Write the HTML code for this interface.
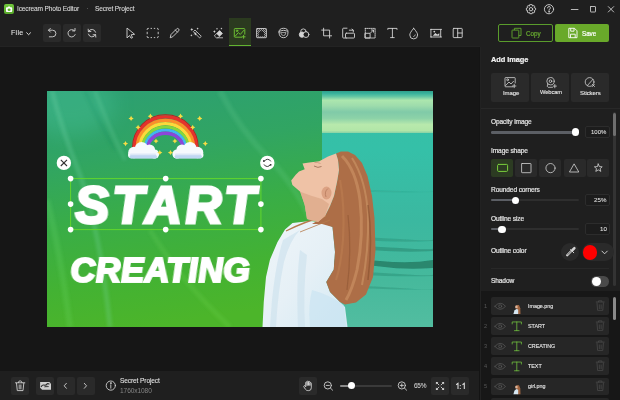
<!DOCTYPE html>
<html><head><meta charset="utf-8">
<style>
*{margin:0;padding:0;box-sizing:border-box}
html,body{width:620px;height:400px;overflow:hidden;background:#1f1f1f;font-family:"Liberation Sans",sans-serif;color:#e6e6e6;-webkit-font-smoothing:antialiased}
.a{position:absolute}
.t{position:absolute;white-space:nowrap;font-size:7px;line-height:1;letter-spacing:-0.2px;will-change:transform;-webkit-text-stroke:0.2px currentColor}
.btn{position:absolute;background:#2a2a2a;border-radius:2px}
svg{position:absolute;overflow:visible}
</style></head><body>
<!-- title bar -->
<div class="a" style="left:0;top:0;width:620px;height:47px;background:#1f1f1f"></div>
<div class="a" style="left:4.2px;top:4.4px;width:9.6px;height:9.4px;background:linear-gradient(#72c83c,#58a82a);border-radius:2px"></div>
<svg style="left:4px;top:4px" width="10" height="10"><path d="M2 4 Q2 3.2 2.8 3.2 H3.8 L4.4 2.4 H5.8 L6.4 3.2 H7.4 Q8.2 3.2 8.2 4 V7.2 Q8.2 8 7.4 8 H2.8 Q2 8 2 7.2 Z" fill="#fff"/><ellipse cx="5.1" cy="5.7" rx="1.5" ry="1.2" fill="#62b530"/></svg>
<div class="t" style="left:17px;top:5.5px;font-size:6.6px;color:#dcdcdc;letter-spacing:-0.15px;-webkit-text-stroke:0.08px #dcdcdc">Icecream Photo Editor</div>
<div class="a" style="left:86.5px;top:8.3px;width:1.2px;height:1.2px;background:#666;border-radius:50%"></div>
<div class="t" style="left:95px;top:5.5px;font-size:6.6px;color:#dcdcdc;letter-spacing:-0.15px;-webkit-text-stroke:0.08px #dcdcdc">Secret Project</div>

<!-- toolbar -->
<div class="t" style="left:10.8px;top:30px;font-size:7.1px;color:#e6e6e6;letter-spacing:0.25px;-webkit-text-stroke:0.05px #e6e6e6">File</div>
<svg style="left:26px;top:31.8px" width="6" height="4"><path d="M0.4 0.5 L2.6 2.7 L4.8 0.5" fill="none" stroke="#e0e0e0" stroke-width="1"/></svg>
<div class="btn" style="left:43px;top:24px;width:18px;height:18px"></div>
<div class="btn" style="left:63px;top:24px;width:18px;height:18px"></div>
<div class="btn" style="left:83px;top:24px;width:18px;height:18px"></div>

<!-- active tab -->
<div class="a" style="left:229px;top:18px;width:22px;height:29px;background:#2b3a1f"></div>
<div class="a" style="left:229px;top:45px;width:22px;height:2px;background:#62b530"></div>

<!-- toolbar icons -->
<svg style="left:0;top:0" width="620" height="47" fill="none" stroke="#d4d4d4" stroke-width="0.9" stroke-linecap="round" stroke-linejoin="round">
<!-- undo -->
<path d="M48.5 30.2 H52.6 A3.3 3.3 0 0 1 52.6 36.8 H49.3"/><path d="M50.4 28.3 L48.5 30.2 L50.4 32.1"/>
<!-- redo -->
<path d="M74.3 30.6 A3.7 3.7 0 1 0 75.2 34.6"/><path d="M72.6 30.9 H75 V28.4"/>
<!-- refresh -->
<path d="M88.5 31.6 A3.8 3.8 0 0 1 95.6 32.2"/><path d="M95.5 34.7 A3.8 3.8 0 0 1 88.4 34.1"/>
<path d="M88.2 29.2 L88.4 31.7 L90.9 31.5"/><path d="M95.8 37.1 L95.6 34.6 L93.1 34.8"/>
<!-- cursor -->
<path d="M127.3 28.3 L134.6 34.3 L131 34.8 L132.6 37.6 L131 38.2 L129.5 35.5 L127.3 37.7 Z"/>
<!-- marquee -->
<path d="M147.2 30 V29.2 Q147.2 28.4 148 28.4 H148.8 M150.6 28.4 H152 M153.8 28.4 H155.2 M157 28.4 H157.4 Q158.2 28.4 158.2 29.2 V30 M158.2 31.8 V34.2 M158.2 36 V36.8 Q158.2 37.6 157.4 37.6 H157 M155.2 37.6 H153.8 M152 37.6 H150.6 M148.8 37.6 H148 Q147.2 37.6 147.2 36.8 V36 M147.2 34.2 V31.8" stroke-linecap="butt"/>
<!-- pencil -->
<path d="M170.3 37.4 L171 34.5 L176.6 28.9 A1.4 1.4 0 0 1 178.6 30.9 L173 36.5 Z"/><path d="M175.4 30.1 L177.4 32.1"/>
<!-- wand -->
<path d="M193.6 31.4 L195 30 L201.3 36.3 L199.9 37.7 Z" stroke-width="0.8"/><path d="M195.8 32.8 L194.4 34.2" stroke-width="0.8"/><path d="M194.3 31.7 L196.7 34.1 L195.3 35.5 Z" fill="#d4d4d4" stroke="none"/>
<path d="M191.8 28.1 Q192.175 29.225 193.3 29.6 Q192.175 29.975 191.8 31.1 Q191.425 29.975 190.3 29.6 Q191.425 29.225 191.8 28.1 Z M197.6 27.5 Q197.875 28.325000000000003 198.7 28.6 Q197.875 28.875 197.6 29.700000000000003 Q197.325 28.875 196.5 28.6 Q197.325 28.325000000000003 197.6 27.5 Z M191.4 34.199999999999996 Q191.675 35.025 192.5 35.3 Q191.675 35.574999999999996 191.4 36.4 Q191.125 35.574999999999996 190.3 35.3 Q191.125 35.025 191.4 34.199999999999996 Z " fill="#d4d4d4" stroke="none"/>
<!-- eraser -->
<path d="M214.6 35.6 L219.6 30.6 L222.4 33.4 L218 37.8 H216.8 Z" stroke-width="0.8"/><path d="M216.5 33.7 L219.6 30.6 L222.4 33.4 L219.3 36.5 Z" fill="#d4d4d4" stroke="none"/><path d="M218 37.8 H222.6" stroke-width="0.8"/>
<path d="M214.4 30.3 Q214.725 31.275000000000002 215.70000000000002 31.6 Q214.725 31.925 214.4 32.9 Q214.07500000000002 31.925 213.1 31.6 Q214.07500000000002 31.275000000000002 214.4 30.3 Z M217 27.8 Q217.25 28.55 218.0 28.8 Q217.25 29.05 217 29.8 Q216.75 29.05 216.0 28.8 Q216.75 28.55 217 27.8 Z M221.4 27.6 Q221.65 28.35 222.4 28.6 Q221.65 28.85 221.4 29.6 Q221.15 28.85 220.4 28.6 Q221.15 28.35 221.4 27.6 Z " fill="#d4d4d4" stroke="none"/>
<!-- texture -->
<rect x="256.6" y="28.5" width="9.8" height="9.2" rx="0.6"/>
<g stroke="none" fill="#bdbdbd"><rect x="257.30" y="29.20" width="0.95" height="0.95"/><rect x="257.30" y="31.10" width="0.95" height="0.95"/><rect x="257.30" y="33.00" width="0.95" height="0.95"/><rect x="257.30" y="34.90" width="0.95" height="0.95"/><rect x="257.30" y="36.80" width="0.95" height="0.95"/><rect x="258.25" y="30.15" width="0.95" height="0.95"/><rect x="258.25" y="32.05" width="0.95" height="0.95"/><rect x="258.25" y="33.95" width="0.95" height="0.95"/><rect x="258.25" y="35.85" width="0.95" height="0.95"/><rect x="259.20" y="29.20" width="0.95" height="0.95"/><rect x="259.20" y="31.10" width="0.95" height="0.95"/><rect x="259.20" y="33.00" width="0.95" height="0.95"/><rect x="259.20" y="34.90" width="0.95" height="0.95"/><rect x="259.20" y="36.80" width="0.95" height="0.95"/><rect x="260.15" y="30.15" width="0.95" height="0.95"/><rect x="260.15" y="32.05" width="0.95" height="0.95"/><rect x="260.15" y="33.95" width="0.95" height="0.95"/><rect x="260.15" y="35.85" width="0.95" height="0.95"/><rect x="261.10" y="29.20" width="0.95" height="0.95"/><rect x="261.10" y="31.10" width="0.95" height="0.95"/><rect x="261.10" y="33.00" width="0.95" height="0.95"/><rect x="261.10" y="34.90" width="0.95" height="0.95"/><rect x="261.10" y="36.80" width="0.95" height="0.95"/><rect x="262.05" y="30.15" width="0.95" height="0.95"/><rect x="262.05" y="32.05" width="0.95" height="0.95"/><rect x="262.05" y="33.95" width="0.95" height="0.95"/><rect x="262.05" y="35.85" width="0.95" height="0.95"/><rect x="263.00" y="29.20" width="0.95" height="0.95"/><rect x="263.00" y="31.10" width="0.95" height="0.95"/><rect x="263.00" y="33.00" width="0.95" height="0.95"/><rect x="263.00" y="34.90" width="0.95" height="0.95"/><rect x="263.00" y="36.80" width="0.95" height="0.95"/><rect x="263.95" y="30.15" width="0.95" height="0.95"/><rect x="263.95" y="32.05" width="0.95" height="0.95"/><rect x="263.95" y="33.95" width="0.95" height="0.95"/><rect x="263.95" y="35.85" width="0.95" height="0.95"/><rect x="264.90" y="29.20" width="0.95" height="0.95"/><rect x="264.90" y="31.10" width="0.95" height="0.95"/><rect x="264.90" y="33.00" width="0.95" height="0.95"/><rect x="264.90" y="34.90" width="0.95" height="0.95"/><rect x="264.90" y="36.80" width="0.95" height="0.95"/></g>
<path d="M259 36.2 V33.8 A2.5 2.5 0 0 1 264 33.8 V36.2 Z" fill="#1f1f1f" stroke="none"/><path d="M259.8 32.3 L261.5 30.8 L263.2 32.3" stroke="#1f1f1f" stroke-width="1"/>
<!-- face -->
<path d="M279 32 Q279 28.3 283.5 28.3 Q288 28.3 288 32 Q288 37.7 283.5 37.7 Q279 37.7 279 32 Z"/><path d="M279.6 31 Q283.5 29.5 287.4 31"/><path d="M281 32.6 H286 L285 35 Q283.5 36.2 282 35 Z" stroke-width="0.7"/>
<!-- colors -->
<circle cx="303.4" cy="31.6" r="2.7"/><circle cx="302" cy="34.6" r="2.7" fill="#d4d4d4"/><circle cx="306" cy="34.6" r="2.9" fill="#1f1f1f" stroke="#d4d4d4"/>
<!-- crop -->
<path d="M323.6 28.2 V35.8 H331.6 M321.7 30.1 H329.6 V38"/>
<!-- transform -->
<path d="M346.5 38 H343.5 A0.8 0.8 0 0 1 342.7 37.2 V29 A0.8 0.8 0 0 1 343.5 28.2 H347"/>
<rect x="345.5" y="33.2" width="9" height="4.8" rx="0.8"/><path d="M349.3 30.2 H353.3 V32 M352 29.1 L353.3 30.2"/>
<!-- dotted resize -->
<rect x="365.3" y="28.4" width="9.8" height="9.6" stroke-dasharray="1 1"/><rect x="365.3" y="33.3" width="4.8" height="4.7"/><path d="M370.5 33 L373.5 30 M371.3 30 H373.5 V32.2"/>
<!-- T -->
<path d="M387.8 29.4 V28.4 H397 V29.4 M392.4 28.4 V37.6 M390.6 37.6 H394.2"/>
<!-- drop -->
<path d="M413.7 28.3 Q409.6 33 409.8 35 A3.9 3.9 0 0 0 417.6 35 Q417.8 33 413.7 28.3 Z"/><path d="M415.3 34.8 Q415.1 36.3 413.6 36.6" stroke-width="0.7"/>
<!-- frame image -->
<rect x="431.3" y="29.4" width="9.4" height="7.6"/><path d="M430.5 29.4 H431.3 M440.7 29.4 H441.5 M430.5 37 H431.3 M440.7 37 H441.5"/>
<path d="M432.8 35.8 L435.3 33 L437.3 34.5 L439.3 33.3 V35.8 Z" fill="#d4d4d4" stroke="none"/><circle cx="434.3" cy="31.6" r="0.9" fill="#d4d4d4" stroke="none"/>
<!-- layout -->
<rect x="453.2" y="28.4" width="9" height="9.2" rx="0.6"/><path d="M457.7 28.4 V37.6 M457.7 33 H462.2"/>
<!-- window controls -->
<circle cx="531" cy="9.2" r="1.7"/>
<path d="M531 4.6 L532.2 4.7 L532.6 6.1 L533.9 5.5 L534.8 6.4 L534.2 7.7 L535.6 8.1 V9.8 L534.2 10.7 L534.8 12 L533.9 12.9 L532.6 12.3 L532.2 13.7 H529.8 L529.4 12.3 L528.1 12.9 L527.2 12 L527.8 10.7 L526.4 10.3 V8.1 L527.8 7.7 L527.2 6.4 L528.1 5.5 L529.4 6.1 L529.8 4.7 Z"/>
<circle cx="549" cy="9.2" r="4.6"/><path d="M547.6 7.9 A1.4 1.4 0 1 1 549.4 9.2 Q549 9.6 549 10.4"/><circle cx="549" cy="11.8" r="0.35" fill="#d4d4d4"/>
<path d="M571.3 9.5 H578" stroke-width="0.85"/>
<rect x="590.5" y="6.5" width="5" height="5.5" rx="0.4" stroke-width="0.85"/>
<path d="M608.3 6.6 L613.7 12 M613.7 6.6 L608.3 12" stroke-width="0.85"/>
</svg>
<!-- active icon -->
<svg style="left:0;top:0" width="620" height="47" fill="none" stroke="#6fc234" stroke-width="0.95" stroke-linecap="round" stroke-linejoin="round">
<path d="M241.6 37.2 H235 A0.7 0.7 0 0 1 234.3 36.5 V29.3 A0.7 0.7 0 0 1 235 28.6 H244.1 A0.7 0.7 0 0 1 244.8 29.3 V34.2"/>
<path d="M235.2 36.2 L238.3 32.6 L240.3 34.4 L243.8 30.4"/><circle cx="237" cy="30.8" r="0.8"/>
<path d="M243.6 35.3 V38.3 M242.1 36.8 H245.1"/>
</svg>
<!-- copy / save -->
<div class="a" style="left:497.8px;top:24.2px;width:55.2px;height:18px;border:1.1px solid #5a9c2c;border-radius:2px"></div>
<div class="t" style="left:525.8px;top:30.8px;font-size:6.3px;color:#68ac30;letter-spacing:-0.05px">Copy</div>
<svg style="left:0;top:0" width="620" height="47" fill="none" stroke="#62a82e" stroke-width="0.9"><path d="M514.4 30 V28.3 H521 V35.5 H518.8"/><rect x="512" y="30.1" width="6.8" height="7.9" rx="0.5"/></svg>
<div class="a" style="left:555px;top:24.2px;width:53.8px;height:18px;background:#69a92a;border-radius:2px"></div>
<div class="t" style="left:582px;top:30.8px;font-size:6.3px;color:#fff;letter-spacing:-0.05px">Save</div>
<svg style="left:0;top:0" width="620" height="47" fill="none" stroke="#fff" stroke-width="0.9"><path d="M568.8 28.3 H574.5 L577 30.8 V37.7 H568.8 Z M570.7 28.3 V31.2 H574 V28.3 M570.5 37.7 V34.2 H575.2 V37.7"/></svg>

<!-- canvas -->
<div class="a" style="left:0;top:47px;width:480px;height:324px;background:#161616"></div>
<div class="a" style="left:0;top:46px;width:480px;height:1px;background:#232323"></div>
<svg style="left:47px;top:91px;overflow:hidden" width="386" height="236" viewBox="47 91 386 236">
<defs>
<linearGradient id="gg" x1="0" y1="0" x2="0.25" y2="1">
<stop offset="0" stop-color="#2c9f74"/><stop offset="0.3" stop-color="#31a562"/><stop offset="0.55" stop-color="#39ad47"/><stop offset="0.8" stop-color="#43b233"/><stop offset="1" stop-color="#4cb52a"/>
</linearGradient>
<filter id="blur8" x="-50%" y="-50%" width="200%" height="200%"><feGaussianBlur stdDeviation="10"/></filter>
<filter id="blur2" x="-20%" y="-20%" width="140%" height="140%"><feGaussianBlur stdDeviation="1.8"/></filter>
<filter id="soft" x="-10%" y="-10%" width="120%" height="120%"><feGaussianBlur stdDeviation="0.6"/></filter>
<linearGradient id="shirt" x1="0" y1="0" x2="1" y2="1"><stop offset="0" stop-color="#eef5f9"/><stop offset="0.5" stop-color="#e6f0f6"/><stop offset="1" stop-color="#d4eaf4"/></linearGradient>
<linearGradient id="sea" x1="0" y1="0" x2="0" y2="1">
<stop offset="0" stop-color="#36bfa6"/><stop offset="0.25" stop-color="#35c0a8"/><stop offset="0.55" stop-color="#3bb8a0"/><stop offset="0.8" stop-color="#46b99c"/><stop offset="1" stop-color="#52bda0"/>
</linearGradient>
<linearGradient id="sky" x1="0" y1="0" x2="0" y2="1">
<stop offset="0" stop-color="#2f9f8c"/><stop offset="0.06" stop-color="#3ab29c"/><stop offset="0.13" stop-color="#62c6a4"/><stop offset="0.22" stop-color="#ace6ae"/><stop offset="0.35" stop-color="#9edcac"/><stop offset="0.5" stop-color="#80caa8"/><stop offset="0.65" stop-color="#8cd2a8"/><stop offset="0.8" stop-color="#b8e9ac"/><stop offset="0.94" stop-color="#b2e6a8"/><stop offset="1" stop-color="#86d2a6"/>
</linearGradient>
</defs>
<rect x="47" y="91" width="386" height="236" fill="url(#gg)"/>
<ellipse cx="70" cy="105" rx="45" ry="30" fill="#45bd92" opacity="0.45" filter="url(#blur8)"/>
<g filter="url(#blur2)" fill="none">
<path d="M52 91 Q62 130 80 175 Q100 230 110 327" stroke="#7fe0b0" stroke-width="5" opacity="0.22"/>
<path d="M95 91 Q110 130 125 160" stroke="#7fe0b0" stroke-width="4" opacity="0.18"/>
<path d="M85 91 Q100 125 115 150" stroke="#1a7a50" stroke-width="3" opacity="0.15"/>
<path d="M220 91 Q240 130 270 160 Q300 190 320 240" stroke="#80e0a0" stroke-width="6" opacity="0.15"/>
<path d="M47 200 Q60 250 70 327" stroke="#80e880" stroke-width="6" opacity="0.15"/>
<path d="M150 230 Q180 280 230 327" stroke="#90f070" stroke-width="5" opacity="0.12"/>
</g>
<rect x="322" y="91" width="111" height="236" fill="url(#sea)"/>
<rect x="322" y="91" width="111" height="42" fill="url(#sky)"/>
<g filter="url(#soft)">
<path d="M322 238 Q360 236 400 239 T433 238 V241 Q400 243 360 240 T322 242 Z" fill="#1f7d66" opacity="0.3"/>
<path d="M322 247 Q360 245 400 248 T433 247 V251 Q400 253 360 249 T322 252 Z" fill="#1f7d66" opacity="0.45"/>
<path d="M322 260 Q350 258 380 261 T433 260 V268 Q405 270 380 266.5 T322 268 Z" fill="#186b54" opacity="0.65"/>
<path d="M322 272 Q360 271 400 274 T433 273 V276 Q400 277 360 275 T322 276 Z" fill="#1f7d66" opacity="0.35"/>
<path d="M322 286 Q360 285 400 288 T433 287 V289.5 Q400 290 360 288 T322 289 Z" fill="#1f7d66" opacity="0.3"/>
<path d="M322 190 Q360 189 400 191 T433 190 V192 Q400 193 360 191.5 T322 192.5 Z" fill="#1f7d66" opacity="0.15"/>
</g>
<!-- rainbow -->
<path d="M132.61 151.6 L132.61 147.6 A32.79 32.90 0 0 1 198.19 147.6 L198.19 151.6" fill="none" stroke="#b81c1c" stroke-width="1.06"/>
<path d="M134.41 151.6 L134.41 147.6 A30.99 30.70 0 0 1 196.39 147.6 L196.39 151.6" fill="none" stroke="#e5312c" stroke-width="3.24"/>
<path d="M137.20 151.6 L137.20 147.6 A28.20 27.30 0 0 1 193.60 147.6 L193.60 151.6" fill="none" stroke="#fb8f2a" stroke-width="3.24"/>
<path d="M139.98 151.6 L139.98 147.6 A25.42 23.90 0 0 1 190.82 147.6 L190.82 151.6" fill="none" stroke="#fdd93a" stroke-width="3.24"/>
<path d="M142.68 151.6 L142.68 147.6 A22.72 20.60 0 0 1 188.12 147.6 L188.12 151.6" fill="none" stroke="#86d63e" stroke-width="3.06"/>
<path d="M145.18 151.6 L145.18 147.6 A20.22 17.55 0 0 1 185.62 147.6 L185.62 151.6" fill="none" stroke="#42b6f0" stroke-width="2.79"/>
<path d="M147.88 151.6 L147.88 147.6 A17.52 14.25 0 0 1 182.92 147.6 L182.92 151.6" fill="none" stroke="#8b46d9" stroke-width="3.52"/>
<g fill="#f6f9fd">
<circle cx="134" cy="152.5" r="5.8"/><circle cx="141.5" cy="148.5" r="6.6"/><circle cx="149.5" cy="150" r="5.6"/><circle cx="154.5" cy="154" r="4.6"/>
<rect x="128" y="152" width="30.5" height="6.2" rx="3.1"/>
<circle cx="177" cy="154" r="4.6"/><circle cx="182" cy="150" r="5.6"/><circle cx="190" cy="148.5" r="6.6"/><circle cx="197.5" cy="152.5" r="5.8"/>
<rect x="173" y="152" width="30.5" height="6.2" rx="3.1"/>
</g>
<g fill="#bfd6f2"><rect x="129.5" y="155" width="27.5" height="3.4" rx="1.7"/><rect x="174.5" y="155" width="27.5" height="3.4" rx="1.7"/></g>
<g fill="#dde8f7"><rect x="130" y="153.6" width="26" height="1.6" rx="0.8"/><rect x="175" y="153.6" width="26" height="1.6" rx="0.8"/></g>
<path d="M131.1 115.80000000000001 Q131.6 117.9 133.7 118.4 Q131.6 118.9 131.1 121.0 Q130.6 118.9 128.5 118.4 Q130.6 117.9 131.1 115.80000000000001Z" fill="#f7dc45"/><path d="M150.4 113.60000000000001 Q150.9 115.7 153.0 116.2 Q150.9 116.7 150.4 118.8 Q149.9 116.7 147.8 116.2 Q149.9 115.7 150.4 113.60000000000001Z" fill="#f7dc45"/><path d="M180.5 113.60000000000001 Q181.0 115.7 183.1 116.2 Q181.0 116.7 180.5 118.8 Q180.0 116.7 177.9 116.2 Q180.0 115.7 180.5 113.60000000000001Z" fill="#f7dc45"/><path d="M199.7 115.80000000000001 Q200.2 117.9 202.29999999999998 118.4 Q200.2 118.9 199.7 121.0 Q199.2 118.9 197.1 118.4 Q199.2 117.9 199.7 115.80000000000001Z" fill="#f7dc45"/><path d="M138.1 124.7 Q138.6 126.8 140.7 127.3 Q138.6 127.8 138.1 129.9 Q137.6 127.8 135.5 127.3 Q137.6 126.8 138.1 124.7Z" fill="#f7dc45"/><path d="M192.7 124.7 Q193.2 126.8 195.29999999999998 127.3 Q193.2 127.8 192.7 129.9 Q192.2 127.8 190.1 127.3 Q192.2 126.8 192.7 124.7Z" fill="#f7dc45"/><path d="M125.5 141.0 Q126.0 143.1 128.1 143.6 Q126.0 144.1 125.5 146.2 Q125.0 144.1 122.9 143.6 Q125.0 143.1 125.5 141.0Z" fill="#f7dc45"/><path d="M205.3 141.0 Q205.8 143.1 207.9 143.6 Q205.8 144.1 205.3 146.2 Q204.8 144.1 202.70000000000002 143.6 Q204.8 143.1 205.3 141.0Z" fill="#f7dc45"/><path d="M156 138.4 Q156.5 140.5 158.6 141 Q156.5 141.5 156 143.6 Q155.5 141.5 153.4 141 Q155.5 140.5 156 138.4Z" fill="#f7dc45"/><path d="M174.9 138.4 Q175.4 140.5 177.5 141 Q175.4 141.5 174.9 143.6 Q174.4 141.5 172.3 141 Q174.4 140.5 174.9 138.4Z" fill="#f7dc45"/><path d="M159.8 149.9 Q160.3 152.0 162.4 152.5 Q160.3 153.0 159.8 155.1 Q159.3 153.0 157.20000000000002 152.5 Q159.3 152.0 159.8 149.9Z" fill="#f7dc45"/><path d="M170.5 149.9 Q171.0 152.0 173.1 152.5 Q171.0 153.0 170.5 155.1 Q170.0 153.0 167.9 152.5 Q170.0 152.0 170.5 149.9Z" fill="#f7dc45"/>
<!-- girl -->
<g filter="url(#soft)">
<path d="M285 229.5 L292.5 223 L310 221 L322.5 222.5 L332.5 227 L335 252 L333.75 269.5 L326.25 282 L330 292 L340 302 L345 307 L347.5 327 L262.5 327 L263.75 302 L266 277 L270 259.5 L277.5 242 Z" fill="url(#shirt)"/>
<path d="M283 240 Q276 262 272 300 L270 327 L276 327 Q278 290 284 262 Q290 240 300 230 Z" fill="#cfe2ee" opacity="0.7"/>
<path d="M300 250 Q296 280 298 327 L305 327 Q303 290 307 255 Z" fill="#cfe2ee" opacity="0.7"/>
<path d="M312 290 Q308 305 310 327 L346 327 L344 305 Q330 295 312 290 Z" fill="#c4e2f0" opacity="0.55"/>
<path d="M336 153.5 L341 151.5 L348 151.5 L355 155 L362 163 L367.5 176 L372 196 L374.5 218 L375.5 250 L373 277 L366 294.5 L356 302.5 L345 304.5 L340 302 L330 292 L326.25 282 L333.75 269.5 L335 252 L332.5 227 L322 224 L312 224 L325 216 L330 206 L334 196 L337 182 L339 170 L338 160 Z" fill="#ad6e46"/>
<path d="M342 156 Q356 170 360 200 Q364 235 357 270 Q352 290 346 300" stroke="#c98f62" stroke-width="3" fill="none" opacity="0.7"/>
<path d="M352 158 Q366 180 368 215 Q369 250 362 285" stroke="#d09a6c" stroke-width="2" fill="none" opacity="0.55"/>
<path d="M340 180 Q345 205 343 240 Q341 265 336 280" stroke="#b97a50" stroke-width="2.2" fill="none" opacity="0.7"/>
<path d="M368 205 Q373 240 368 280" stroke="#7e4a2c" stroke-width="1.5" fill="none" opacity="0.5"/>
<path d="M348 215 Q352 250 347 290" stroke="#8a5232" stroke-width="1.2" fill="none" opacity="0.5"/>
<path d="M326 216 Q306 221 286 231" stroke="#b57a4c" stroke-width="1.3" fill="none"/><path d="M330 220 Q315 226 300 232" stroke="#b57a4c" stroke-width="1" fill="none" opacity="0.8"/>
<path d="M336 153.5 L328 156.5 L319.3 161.3 L309.2 162.5 L302.5 163.6 L304.7 169.2 L299 171.5 L295.7 174.8 L291.2 180.4 L292.4 185 L300.2 191.7 L304.7 205 L307 219 L318 222 L325 216 L330 206 L334 196 L337 182 L339 170 L338 160 Z" fill="#efc2a6"/>
<path d="M300.2 191.7 L312 196 L322 199 L329 204 L325 216 L318 222 L307 219 L304.7 205 Z" fill="#dba687" opacity="0.7"/>
<path d="M314 166 Q318 168.5 321.5 166.5" stroke="#8a5a44" stroke-width="0.7" fill="none"/><path d="M314.5 162.5 Q317.5 162 320.5 163.5" stroke="#b88a70" stroke-width="0.6" fill="none"/>
<ellipse cx="326.5" cy="193" rx="5" ry="6.5" fill="#dca283"/>
<path d="M328 188.5 Q324 191.5 326 197" stroke="#b67a5c" stroke-width="0.8" fill="none"/>
</g>
</svg>

<!-- canvas texts -->
<div class="a" style="left:76.4px;top:180.4px;font-weight:bold;font-style:italic;font-size:51px;line-height:1;color:#fff;-webkit-text-stroke:3px #fff;letter-spacing:3.9px;white-space:nowrap;will-change:transform;transform:skewX(3deg);transform-origin:0 45px">START</div>
<div class="a" style="left:71.3px;top:252.6px;font-weight:bold;font-style:italic;font-size:34.5px;line-height:1;color:#fff;-webkit-text-stroke:2.2px #fff;letter-spacing:0.3px;white-space:nowrap;will-change:transform;transform:skewX(3deg);transform-origin:0 30px">CREATING</div>
<!-- selection -->
<svg style="left:0;top:0" width="620" height="400">
<rect x="70.6" y="178.6" width="190.3" height="51" fill="none" stroke="#62d62e" stroke-width="1"/>
<g fill="#fff">
<circle cx="70.6" cy="178.6" r="2.8"/><circle cx="165.7" cy="178.6" r="2.8"/><circle cx="260.9" cy="178.6" r="2.8"/>
<circle cx="70.6" cy="204.1" r="2.8"/><circle cx="260.9" cy="204.1" r="2.8"/>
<circle cx="70.6" cy="229.6" r="2.8"/><circle cx="165.7" cy="229.6" r="2.8"/><circle cx="260.9" cy="229.6" r="2.8"/>
<circle cx="63.9" cy="162.9" r="7.2"/><circle cx="267.3" cy="162.9" r="7.2"/>
</g>
<path d="M60.8 159.8 L67 166 M67 159.8 L60.8 166" stroke="#333" stroke-width="1.1"/>
<path d="M264.2 161.4 Q265.5 159.3 267.5 159.3 Q269.8 159.3 270.8 161.4 M270.4 164.4 Q269.3 166.5 267.3 166.5 Q265 166.5 264 164.4" fill="none" stroke="#2a2a2a" stroke-width="0.9"/>
<circle cx="263.9" cy="161" r="0.9" fill="#2a2a2a"/><circle cx="270.7" cy="164.8" r="0.9" fill="#2a2a2a"/>
</svg>
<!-- bottom bar -->
<div class="a" style="left:0;top:371px;width:481px;height:29px;background:#1f1f1f"></div>
<div class="btn" style="left:11px;top:377px;width:18px;height:17.5px"></div>
<div class="btn" style="left:36px;top:377px;width:18px;height:17.5px"></div>
<div class="btn" style="left:56.5px;top:377px;width:18px;height:17.5px"></div>
<div class="btn" style="left:76.5px;top:377px;width:18px;height:17.5px"></div>
<div class="btn" style="left:299px;top:377px;width:18px;height:17.5px"></div>
<div class="btn" style="left:431px;top:377px;width:18px;height:17.5px"></div>
<div class="btn" style="left:451px;top:377px;width:18px;height:17.5px"></div>
<div class="t" style="left:120px;top:377.5px;font-size:6.6px;color:#e8e8e8;letter-spacing:-0.12px;-webkit-text-stroke:0.05px #e8e8e8">Secret Project</div>
<div class="t" style="left:120px;top:387.8px;font-size:6.6px;color:#858585;letter-spacing:-0.1px;-webkit-text-stroke:0">1760x1080</div>
<div class="t" style="left:413.9px;top:383px;font-size:6.5px;color:#d8d8d8;letter-spacing:-0.3px;-webkit-text-stroke:0.05px #d8d8d8">65%</div>
<svg style="left:0;top:0" width="620" height="400"><path d="M456.2 384.7 L458 383.4 V389.1 M462.5 384.7 L464.3 383.4 V389.1" fill="none" stroke="#e0e0e0" stroke-width="1.05"/><circle cx="460.3" cy="385.6" r="0.6" fill="#e0e0e0"/><circle cx="460.3" cy="388.5" r="0.6" fill="#e0e0e0"/></svg>
<svg style="left:0;top:371px" width="481" height="29" viewBox="0 371 481 29" fill="none" stroke="#d0d0d0" stroke-width="0.9" stroke-linecap="round" stroke-linejoin="round">
<!-- trash -->
<path d="M15.5 382.8 H24.8 M18.3 382.6 Q18.5 380.8 20.1 380.8 Q21.8 380.8 22 382.6 M16.5 383.3 L17.3 390.6 H23 L23.8 383.3"/>
<rect x="18.6" y="384.5" width="3" height="4.8" fill="#8a8a8a" stroke="none"/>
<!-- image -->
<path d="M40.1 381.9 H49.4 L51 383.8 V389.7 H42.1 L40.1 387.7 Z" fill="#cfcfcf" stroke="none"/>
<path d="M41.3 386.6 Q42.3 384.6 44 385 Q45.6 385.6 46.6 384.3 Q47.6 383.2 49 384" stroke="#2a2a2a" stroke-width="1.1"/><path d="M44.8 386.6 Q46.5 385.3 48.3 386.4 Z" fill="#2a2a2a" stroke="#2a2a2a" stroke-width="0.6"/>
<!-- prev/next -->
<path d="M66.4 383.3 L64.2 385.8 L66.4 388.3 M84.3 383.3 L86.5 385.8 L84.3 388.3"/>
<!-- info -->
<circle cx="110.8" cy="385.6" r="4.6"/><path d="M110.8 384.8 V388.2"/><circle cx="110.8" cy="383.1" r="0.45" fill="#d0d0d0"/>
<!-- hand -->
<path d="M305.7 386.5 V382.6 A0.7 0.7 0 0 1 307.1 382.6 V385.5 M307.1 385 V381.8 A0.7 0.7 0 0 1 308.5 381.8 V385 M308.5 385 V382.1 A0.7 0.7 0 0 1 309.9 382.1 V385.2 M309.9 385.2 V383.3 A0.7 0.7 0 0 1 311.3 383.3 V387.8 Q311.3 390.6 308.7 390.6 H307.8 Q306.4 390.6 305.4 389.2 L303.8 386.8 A0.8 0.8 0 0 1 305.1 385.9 L305.7 386.6"/>
<!-- zoom out -->
<circle cx="327.8" cy="385.4" r="3.6"/><path d="M330.4 388 L332.6 390.2 M326.2 385.4 H329.4"/>
<!-- zoom in -->
<circle cx="401.8" cy="385.4" r="3.6"/><path d="M404.4 388 L406.6 390.2 M400.2 385.4 H403.4 M401.8 383.8 V387"/>
<!-- fullscreen -->
<path d="M437 383 L438.9 384.9 M443 383 L441.1 384.9 M437 389 L438.9 387.1 M443 389 L441.1 387.1" stroke-width="0.9"/>
<path d="M435.9 381.9 H438.4 L435.9 384.4 Z M444.1 381.9 H441.6 L444.1 384.4 Z M435.9 390.1 H438.4 L435.9 387.6 Z M444.1 390.1 H441.6 L444.1 387.6 Z" fill="#d0d0d0" stroke="none"/>
</svg>
<!-- zoom slider -->
<div class="a" style="left:339.5px;top:384.8px;width:52px;height:2px;background:#3a3a3a;border-radius:1px"></div>
<div class="a" style="left:339.5px;top:384.8px;width:12px;height:2px;background:#8a8a8a;border-radius:1px"></div>
<div class="a" style="left:348.3px;top:382.3px;width:7px;height:7px;background:#fff;border-radius:50%"></div>


<!-- right panel -->
<div class="a" style="left:481px;top:47px;width:139px;height:244px;background:#1f1f1f"></div>
<div class="a" style="left:479px;top:47px;width:1px;height:353px;background:#141414"></div><div class="a" style="left:480px;top:47px;width:1px;height:353px;background:#222222"></div>
<div class="t" style="left:491px;top:56px;font-size:7.4px;font-weight:bold;color:#f2f2f2;letter-spacing:-0.05px">Add Image</div>
<div class="btn" style="left:491px;top:72.5px;width:38.3px;height:29px"></div>
<div class="btn" style="left:531px;top:72.5px;width:38.3px;height:29px"></div>
<div class="btn" style="left:571px;top:72.5px;width:38.3px;height:29px"></div>
<div class="t" style="left:502.8px;top:90.4px;font-size:6px;color:#e8e8e8;letter-spacing:-0.08px;-webkit-text-stroke:0.1px #e8e8e8">Image</div>
<div class="t" style="left:539.5px;top:90.4px;font-size:5.8px;color:#e8e8e8;letter-spacing:-0.12px;-webkit-text-stroke:0.1px #e8e8e8">Webcam</div>
<div class="t" style="left:579.7px;top:90.4px;font-size:6px;color:#e8e8e8;letter-spacing:-0.1px;-webkit-text-stroke:0.1px #e8e8e8">Stickers</div>
<div class="a" style="left:481px;top:108px;width:139px;height:1px;background:#282828"></div>
<!-- scrollbar upper -->
<div class="a" style="left:613px;top:112px;width:3px;height:174px;background:#333;border-radius:1.5px"></div>
<div class="a" style="left:613px;top:112.5px;width:3px;height:23px;background:#6e6e6e;border-radius:1.5px"></div>

<div class="t" style="left:491px;top:118.5px;font-size:6.6px;color:#e4e4e4;letter-spacing:-0.12px">Opacity image</div>
<div class="a" style="left:491px;top:131px;width:85px;height:2.5px;background:#5c5f65;border-radius:1.25px"></div>
<div class="a" style="left:572px;top:128.4px;width:7.4px;height:7.4px;background:#fff;border-radius:50%"></div>
<div class="a" style="left:585.4px;top:126.3px;width:24.2px;height:11.6px;border:1px solid #2c2c2c;border-radius:2px;background:#1c1c1c"></div>
<div class="t" style="right:13.2px;top:129.3px;font-size:6px;color:#e4e4e4;letter-spacing:0px;-webkit-text-stroke:0.05px #e4e4e4">100%</div>

<div class="t" style="left:491px;top:147.8px;font-size:6.6px;color:#e4e4e4;letter-spacing:-0.12px">Image shape</div>
<div class="a" style="left:491.2px;top:158.8px;width:22px;height:17.8px;background:#2c3b22;border-radius:2px"></div>
<div class="btn" style="left:515.3px;top:158.8px;width:22px;height:17.8px"></div>
<div class="btn" style="left:539.4px;top:158.8px;width:22px;height:17.8px"></div>
<div class="btn" style="left:563.5px;top:158.8px;width:22px;height:17.8px"></div>
<div class="btn" style="left:587.3px;top:158.8px;width:22px;height:17.8px"></div>

<div class="t" style="left:491px;top:187.0px;font-size:6.6px;color:#e4e4e4;letter-spacing:-0.12px">Rounded corners</div>
<div class="a" style="left:491px;top:199.3px;width:88px;height:2px;background:#2e2e2e;border-radius:1.25px"></div>
<div class="a" style="left:491px;top:199.3px;width:24px;height:2px;background:#5c5f65;border-radius:1.25px"></div>
<div class="a" style="left:511.5px;top:196.5px;width:7.4px;height:7.4px;background:#fff;border-radius:50%"></div>
<div class="a" style="left:585px;top:194.3px;width:24.5px;height:11.5px;border:1px solid #2c2c2c;border-radius:2px;background:#1c1c1c"></div>
<div class="t" style="right:13.2px;top:197.2px;font-size:6.2px;color:#e4e4e4;letter-spacing:0px;-webkit-text-stroke:0.05px #e4e4e4">25%</div>

<div class="t" style="left:491px;top:216.0px;font-size:6.6px;color:#e4e4e4;letter-spacing:-0.12px">Outline size</div>
<div class="a" style="left:491px;top:228.3px;width:88px;height:2px;background:#2e2e2e;border-radius:1.25px"></div>
<div class="a" style="left:491px;top:228.3px;width:11px;height:2px;background:#5c5f65;border-radius:1.25px"></div>
<div class="a" style="left:498.3px;top:225.5px;width:7.4px;height:7.4px;background:#fff;border-radius:50%"></div>
<div class="a" style="left:585px;top:223.2px;width:24.5px;height:11.8px;border:1px solid #2c2c2c;border-radius:2px;background:#1c1c1c"></div>
<div class="t" style="right:13.2px;top:226.2px;font-size:6.2px;color:#e4e4e4;letter-spacing:0px;-webkit-text-stroke:0.05px #e4e4e4">10</div>

<div class="t" style="left:491px;top:248.0px;font-size:6.6px;color:#e4e4e4;letter-spacing:-0.12px">Outline color</div>
<div class="a" style="left:561.3px;top:243.4px;width:18px;height:18px;background:#2a2a2a;border-radius:50%"></div>
<div class="a" style="left:581.5px;top:243.4px;width:32px;height:18px;background:#2a2a2a;border-radius:9px"></div>
<div class="a" style="left:582.8px;top:245.1px;width:14.6px;height:14.6px;background:#f00;border-radius:50%"></div>
<div class="a" style="left:491px;top:268px;width:118px;height:1px;background:#282828"></div>
<div class="t" style="left:491px;top:277.6px;font-size:6.6px;color:#e4e4e4;letter-spacing:-0.12px">Shadow</div>
<div class="a" style="left:591px;top:276px;width:18px;height:10.5px;background:#4a4a4a;border-radius:5.25px"></div>
<div class="a" style="left:591.6px;top:276.6px;width:9.3px;height:9.3px;background:#fff;border-radius:50%"></div>

<svg style="left:480px;top:47px" width="140" height="353" viewBox="480 47 140 353" fill="none" stroke="#d4d4d4" stroke-width="0.8" stroke-linecap="round" stroke-linejoin="round">
<!-- add image icons -->
<path d="M513 86.8 H505.6 A0.6 0.6 0 0 1 505 86.2 V78.2 A0.6 0.6 0 0 1 505.6 77.6 H514.6 A0.6 0.6 0 0 1 515.2 78.2 V83"/>
<path d="M505.6 85.5 L509 82 L511 84 L513.5 81.3"/><circle cx="507.6" cy="79.8" r="0.9"/><path d="M514.2 84.3 V87.7 M512.5 86 H515.9"/>
<circle cx="550.5" cy="81.2" r="3.7"/><circle cx="550.5" cy="81.2" r="1.3"/><path d="M547.8 84 Q546.3 87 548.2 87.3 H552.5 M554.8 84.5 V87.8 M553.2 86.1 H556.4"/>
<circle cx="589.6" cy="82" r="4.4"/><path d="M587.3 85.6 L593 79.3 M592.5 84.5 L594.5 86.5 M594.3 84.5 L592.5 86.5"/>
<!-- shapes -->
<rect x="497.6" y="164.4" width="10" height="7" rx="1" stroke="#7ad13c" stroke-width="1"/>
<rect x="521.6" y="163.5" width="9.4" height="9.2" rx="0.5"/>
<circle cx="550.5" cy="168.1" r="4.6"/>
<path d="M574.3 164.2 L578.8 172 H569.8 Z"/>
<path d="M598.3 164 L599.4 166.6 L602.2 166.8 L600.1 168.6 L600.8 171.4 L598.3 169.9 L595.8 171.4 L596.5 168.6 L594.4 166.8 L597.2 166.6 Z"/>
<!-- eyedropper -->
<path d="M567.2 255.2 L571.6 250.8" stroke-width="2.3"/><path d="M567.9 254.5 L571 251.4" stroke="#2a2a2a" stroke-width="0.7"/><path d="M572.6 250 L574.4 248.2" stroke-width="2.5"/><path d="M570.6 249.6 L573.8 252.8" stroke-width="1"/>
<!-- chevron -->
<path d="M601.9 251.1 L604.6 253.8 L607.3 251.1" stroke-width="0.95"/>
</svg>
<!-- layer list -->
<div class="a" style="left:481px;top:291px;width:139px;height:109px;background:#171717"></div>
<div class="a" style="left:613px;top:297px;width:3px;height:23px;background:#8a8a8a;border-radius:1.5px"></div>
<div class="a" style="left:491.2px;top:297.30px;width:118px;height:17.8px;background:#262626;border-radius:2px"></div>
<div class="t" style="left:484.3px;top:304.10px;font-size:5.6px;color:#575757;-webkit-text-stroke:0">1</div>
<div class="t" style="left:527.6px;top:304.20px;font-size:5.4px;color:#e8e8e8;letter-spacing:-0.03px;-webkit-text-stroke:0.1px #e8e8e8">Image.png</div>
<div class="a" style="left:491.2px;top:317.35px;width:118px;height:17.8px;background:#262626;border-radius:2px"></div>
<div class="t" style="left:484.3px;top:324.15px;font-size:5.6px;color:#575757;-webkit-text-stroke:0">2</div>
<div class="t" style="left:527.6px;top:324.25px;font-size:5.4px;color:#e8e8e8;letter-spacing:-0.03px;-webkit-text-stroke:0.1px #e8e8e8">START</div>
<div class="a" style="left:491.2px;top:337.40px;width:118px;height:17.8px;background:#262626;border-radius:2px"></div>
<div class="t" style="left:484.3px;top:344.20px;font-size:5.6px;color:#575757;-webkit-text-stroke:0">3</div>
<div class="t" style="left:527.6px;top:344.30px;font-size:5.4px;color:#e8e8e8;letter-spacing:-0.03px;-webkit-text-stroke:0.1px #e8e8e8">CREATING</div>
<div class="a" style="left:491.2px;top:357.45px;width:118px;height:17.8px;background:#262626;border-radius:2px"></div>
<div class="t" style="left:484.3px;top:364.25px;font-size:5.6px;color:#575757;-webkit-text-stroke:0">4</div>
<div class="t" style="left:527.6px;top:364.35px;font-size:5.4px;color:#e8e8e8;letter-spacing:-0.03px;-webkit-text-stroke:0.1px #e8e8e8">TEXT</div>
<div class="a" style="left:491.2px;top:377.50px;width:118px;height:17.8px;background:#262626;border-radius:2px"></div>
<div class="t" style="left:484.3px;top:384.30px;font-size:5.6px;color:#575757;-webkit-text-stroke:0">5</div>
<div class="t" style="left:527.6px;top:384.40px;font-size:5.4px;color:#e8e8e8;letter-spacing:-0.03px;-webkit-text-stroke:0.1px #e8e8e8">girl.png</div>
<div class="a" style="left:491.2px;top:397.55px;width:118px;height:17.8px;background:#262626;border-radius:2px"></div>
<svg style="left:480px;top:291px" width="140" height="109" viewBox="480 291 140 109" fill="none" stroke-linecap="round" stroke-linejoin="round">
<path d="M494.9 306.30 Q500.2 300.10 505.5 306.30 Q500.2 312.50 494.9 306.30 Z" stroke="#5a5a5a" stroke-width="0.75"/><circle cx="500.2" cy="306.30" r="1.5" stroke="#5a5a5a" stroke-width="0.75"/>
<path d="M596.2 302.00 H604.2 M598.5 301.80 V300.80 H601.9 V301.80 M597 303.00 L597.6 310.30 H602.8 L603.4 303.00 M599.3 304.80 V308.60 M601.1 304.80 V308.60" stroke="#4a4a4a" stroke-width="0.8"/>
<path d="M516.8 304.90 L519 305.10 L520.3 308.30 L520.5 314.00 L517.3 314.00 Z" fill="#9e6440" stroke="none"/><ellipse cx="516.4" cy="306.90" rx="1.3" ry="1.6" fill="#e3b496"/><path d="M513.4 314.00 L514.4 310.50 L516.3 308.90 L518.2 309.50 L518.2 314.00 Z" fill="#d6e6f2" stroke="none"/>
<path d="M494.9 326.35 Q500.2 320.15 505.5 326.35 Q500.2 332.55 494.9 326.35 Z" stroke="#5a5a5a" stroke-width="0.75"/><circle cx="500.2" cy="326.35" r="1.5" stroke="#5a5a5a" stroke-width="0.75"/>
<path d="M596.2 322.05 H604.2 M598.5 321.85 V320.85 H601.9 V321.85 M597 323.05 L597.6 330.35 H602.8 L603.4 323.05 M599.3 324.85 V328.65 M601.1 324.85 V328.65" stroke="#4a4a4a" stroke-width="0.8"/>
<path d="M512.2 323.95 V321.95 H521.4 V323.95 M516.8 321.95 V330.65 M514.5 330.65 H519.1" stroke="#74c840" stroke-width="0.75"/>
<path d="M494.9 346.40 Q500.2 340.20 505.5 346.40 Q500.2 352.60 494.9 346.40 Z" stroke="#5a5a5a" stroke-width="0.75"/><circle cx="500.2" cy="346.40" r="1.5" stroke="#5a5a5a" stroke-width="0.75"/>
<path d="M596.2 342.10 H604.2 M598.5 341.90 V340.90 H601.9 V341.90 M597 343.10 L597.6 350.40 H602.8 L603.4 343.10 M599.3 344.90 V348.70 M601.1 344.90 V348.70" stroke="#4a4a4a" stroke-width="0.8"/>
<path d="M512.2 344.00 V342.00 H521.4 V344.00 M516.8 342.00 V350.70 M514.5 350.70 H519.1" stroke="#74c840" stroke-width="0.75"/>
<path d="M494.9 366.45 Q500.2 360.25 505.5 366.45 Q500.2 372.65 494.9 366.45 Z" stroke="#5a5a5a" stroke-width="0.75"/><circle cx="500.2" cy="366.45" r="1.5" stroke="#5a5a5a" stroke-width="0.75"/>
<path d="M596.2 362.15 H604.2 M598.5 361.95 V360.95 H601.9 V361.95 M597 363.15 L597.6 370.45 H602.8 L603.4 363.15 M599.3 364.95 V368.75 M601.1 364.95 V368.75" stroke="#4a4a4a" stroke-width="0.8"/>
<path d="M512.2 364.05 V362.05 H521.4 V364.05 M516.8 362.05 V370.75 M514.5 370.75 H519.1" stroke="#74c840" stroke-width="0.75"/>
<path d="M494.9 386.50 Q500.2 380.30 505.5 386.50 Q500.2 392.70 494.9 386.50 Z" stroke="#5a5a5a" stroke-width="0.75"/><circle cx="500.2" cy="386.50" r="1.5" stroke="#5a5a5a" stroke-width="0.75"/>
<path d="M596.2 382.20 H604.2 M598.5 382.00 V381.00 H601.9 V382.00 M597 383.20 L597.6 390.50 H602.8 L603.4 383.20 M599.3 385.00 V388.80 M601.1 385.00 V388.80" stroke="#4a4a4a" stroke-width="0.8"/>
<path d="M516.8 385.10 L519 385.30 L520.3 388.50 L520.5 394.20 L517.3 394.20 Z" fill="#9e6440" stroke="none"/><ellipse cx="516.4" cy="387.10" rx="1.3" ry="1.6" fill="#e3b496"/><path d="M513.4 394.20 L514.4 390.70 L516.3 389.10 L518.2 389.70 L518.2 394.20 Z" fill="#d6e6f2" stroke="none"/>
</svg>
</body></html>
